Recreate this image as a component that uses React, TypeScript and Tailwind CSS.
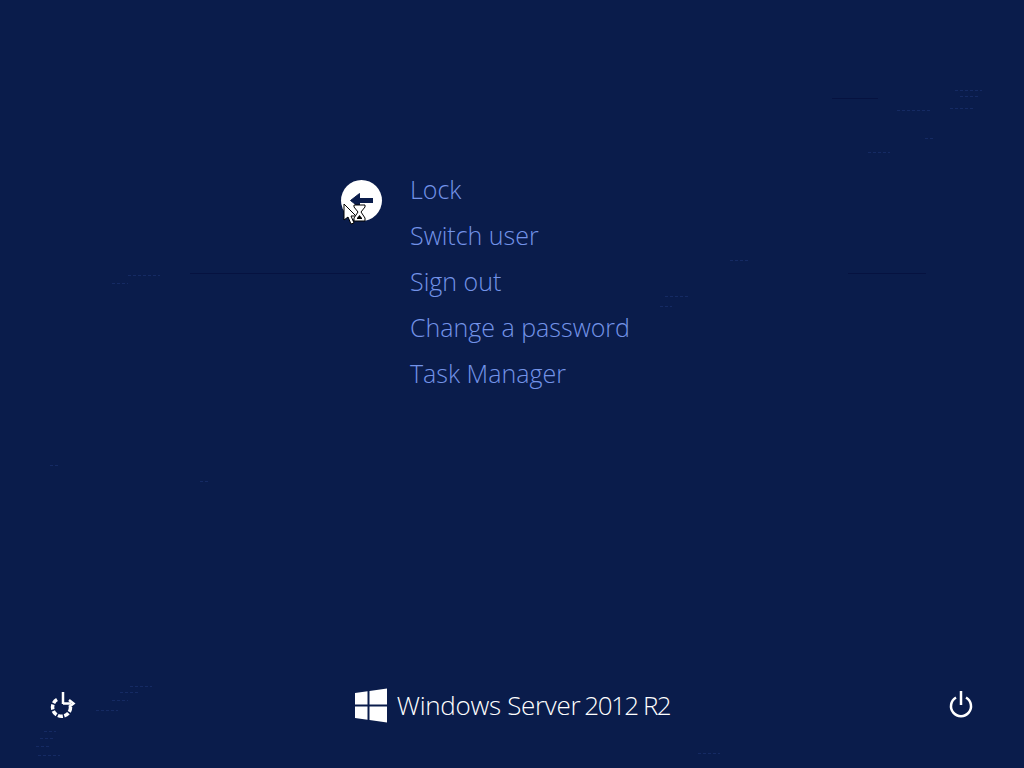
const menuItems = ["Lock", "Switch user", "Sign out", "Change a password", "Task Manager"];

// faint banding left over in the wallpaper
function WallpaperNoise() {
  return (
    <svg className="absolute inset-0" width="1024" height="768" viewBox="0 0 1024 768" fill="none" strokeWidth="1">
      <g stroke="#061240">
        <path d="M190 273.500H370" />
        <path d="M848 273.500H926" />
        <path d="M832 98.500H878" />
      </g>
      <g stroke="#152a63" strokeDasharray="3 2">
        <path d="M128 275.500H160" />
        <path d="M112 283.500H128" />
        <path d="M730 260.500H750" />
        <path d="M665 296.500H688" />
        <path d="M660 306.500H672" />
        <path d="M897 110.500H930" />
        <path d="M950 108.500H975" />
        <path d="M955 90.500H982" />
        <path d="M960 96.500H980" />
        <path d="M868 152.500H890" />
        <path d="M925 138.500H934" />
        <path d="M50 465.500H58" />
        <path d="M200 481.500H208" />
        <path d="M130 686.500H152" />
        <path d="M120 692.500H140" />
        <path d="M112 700.500H128" />
        <path d="M96 710.500H118" />
        <path d="M44 731.500H56" />
        <path d="M40 738.500H54" />
        <path d="M36 746.500H50" />
        <path d="M38 755.500H60" />
        <path d="M698 753.500H720" />
      </g>
    </svg>
  );
}

function BackButton() {
  return (
    <button className="relative w-[41px] h-[41px] rounded-full bg-white flex items-center justify-center">
      <svg width="41" height="41" viewBox="0 0 41 41" fill="none" stroke="#0a1c4b">
        <path d="M32 20.500H14" strokeWidth="5" />
        <path d="M9.500 20.500l9-7v14z" fill="#0a1c4b" strokeWidth="1" />
      </svg>
      {/* busy cursor */}
      <svg className="absolute left-[2px] top-[23px]" width="26" height="24" viewBox="0 0 26 24">
        <path d="M1 1v16l4-3 3 7 3-1-3-7h5z" fill="#fff" stroke="#000" strokeWidth="1" />
        <path d="M11 2h11v2l-4 5 4 6v3H11v-3l4-6-4-5z" fill="#fff" stroke="#000" strokeWidth="1" />
        <path d="M14 15l2.500-3 2.500 3v1h-5z" fill="#000" />
      </svg>
    </button>
  );
}

function EaseOfAccessIcon() {
  return (
    <svg width="28" height="28" viewBox="0 0 28 28" fill="none" stroke="#fff" strokeWidth="3.500">
      <path d="M8 8.500a9 9 0 1 0 13.500 7" strokeDasharray="5 1.500" />
      <path d="M14 1v12" strokeWidth="2.500" />
      <path d="M14 12.500h8" strokeWidth="2.500" />
      <path d="M20 9l4.500 3.500-4.500 3.500" strokeWidth="2.500" />
    </svg>
  );
}

function WindowsLogo() {
  return (
    <svg width="34" height="35" viewBox="0 0 34 35" fill="#fff">
      <path d="M1 5l12.500-1.800V16.500H1z" />
      <path d="M15.500 3L33 0.500V16.500H15.500z" />
      <path d="M1 18.500h12.500v13.300L1 30z" />
      <path d="M15.500 18.500H33v16l-17.500-2.500z" />
    </svg>
  );
}

function PowerIcon() {
  return (
    <svg width="24" height="28" viewBox="0 0 24 28" fill="none" stroke="#fff" strokeWidth="2.500">
      <path d="M7 6.500a10 10 0 1 0 10 0" />
      <path d="M12 0v14" />
    </svg>
  );
}

export default function App() {
  return (
    <div
      className="relative w-[1024px] h-[768px] overflow-hidden bg-[#0a1c4b] flex flex-col"
      style={{ fontFamily: '"Open Sans", "Noto Sans", sans-serif' }}
    >
      <WallpaperNoise />

      <main className="relative flex-1 flex items-start pt-[166px] pl-[341px]">
        <div className="mt-[14px]">
          <BackButton />
        </div>
        <ul className="ml-[28px] flex flex-col">
          {menuItems.map((item) => (
            <li key={item} className="h-[46px] leading-[46px] text-[25px] font-light text-[#7393e8]">
              {item}
            </li>
          ))}
        </ul>
      </main>

      <footer className="relative flex items-center justify-between h-[46px] mb-[40px] pl-[49px] pr-[51px]">
        <EaseOfAccessIcon />
        <div className="flex items-center -translate-x-px">
          <WindowsLogo />
          <span className="ml-[9px] text-[26px] tracking-[-0.3px] font-light text-white whitespace-nowrap">
            Windows Server
          </span>
          <span className="ml-[4px] text-[26px] tracking-[-1.5px] font-light text-white whitespace-nowrap">
            2012 R2
          </span>
        </div>
        <PowerIcon />
      </footer>
    </div>
  );
}
